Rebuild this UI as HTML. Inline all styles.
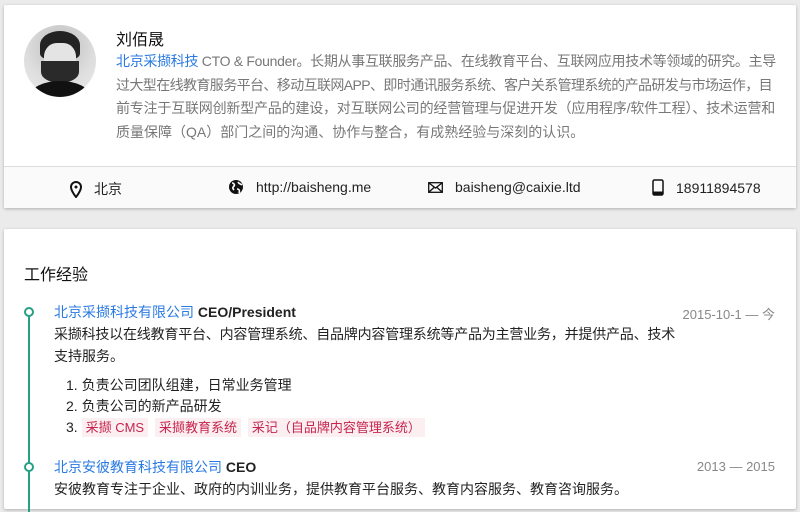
<!DOCTYPE html>
<html><head><meta charset="utf-8"><style>
*{margin:0;padding:0;box-sizing:border-box}
body{width:800px;height:499px;overflow:hidden;background:#ebebeb;font-family:"Liberation Sans","Noto Sans CJK SC",sans-serif;color:#222}
.card{position:absolute;left:4px;width:792px;background:#fff;border-radius:2px;box-shadow:0 1px 3px rgba(0,0,0,.25)}
.c1{top:5px;height:203px}
.av{position:absolute;left:20px;top:20px;width:72px;height:72px;border-radius:50%;background:radial-gradient(circle at 50% 30%,#bbb 0,#ddd 55%,#eee 100%);overflow:hidden}
.name{position:absolute;left:112px;top:21px;font-size:16px;color:#111}
.bio{position:absolute;left:112px;top:45px;width:680px;font-size:14px;line-height:23.5px;color:#777;white-space:nowrap}
.bio span{display:block}
a{color:#2a7ae2;text-decoration:none}
.bar{position:absolute;left:0;top:161px;width:792px;height:42px;background:#fafafa;border-top:1px solid #ddd;font-size:14px;color:#222}
.it{position:absolute;top:12px;display:flex;align-items:center}
.it svg{margin-right:12px}
.c2{top:229px;height:280px}
h2{position:absolute;left:20px;top:32px;font-size:16px;font-weight:normal;color:#111}
.line{position:absolute;left:24px;top:83px;width:2px;height:200px;background:#26a085}
.dot{position:absolute;left:20px;width:10px;height:10px;border:2px solid #26a085;border-radius:50%;background:#fff}
.ent{position:absolute;left:50px;width:720px;font-size:14px;line-height:22px;color:#222;white-space:nowrap}
.ent b{font-weight:bold}
.date{position:absolute;right:21px;font-size:13px;color:#888}
ol{margin:8px 0 0 12px;list-style:none}
ol li{line-height:21px}
.tag{background:#fbeff1;color:#c7254e;padding:2px 4px;font-size:13px;margin-right:3px}
</style></head><body>
<div class="card c1">
 <div class="av">
  <div style="position:absolute;left:16px;top:6px;width:40px;height:28px;background:#222;border-radius:50% 50% 20% 20%"></div>
  <div style="position:absolute;left:20px;top:18px;width:32px;height:34px;background:#e4e4e4;border-radius:40%"></div>
  <div style="position:absolute;left:17px;top:36px;width:38px;height:22px;background:#2a2a2a;border-radius:0 0 50% 50%"></div>
  <div style="position:absolute;left:6px;top:56px;width:60px;height:30px;background:#111;border-radius:50% 50% 0 0"></div>
 </div>
 <div class="name">刘佰晟</div>
 <div class="bio"><span style="letter-spacing:-0.3px"><a>北京采撷科技</a> CTO &amp; Founder。长期从事互联服务产品、在线教育平台、互联网应用技术等领域的研究。主导</span><span style="letter-spacing:-0.6px">过大型在线教育服务平台、移动互联网APP、即时通讯服务系统、客户关系管理系统的产品研发与市场运作，目</span><span style="letter-spacing:-0.2px">前专注于互联网创新型产品的建设，对互联网公司的经营管理与促进开发（应用程序/软件工程）、技术运营和</span><span>质量保障（QA）部门之间的沟通、协作与整合，有成熟经验与深刻的认识。</span></div>
 <div class="bar">
  <div class="it" style="left:66px"><svg width="12" height="17" viewBox="0 0 12 17"><path d="M6 1a5 5 0 0 0-5 5c0 4 5 10 5 10s5-6 5-10a5 5 0 0 0-5-5z" fill="none" stroke="#111" stroke-width="2"/><circle cx="6" cy="6" r="1.5" fill="#111"/></svg>北京</div>
  <div class="it" style="left:224px"><svg width="16" height="16" viewBox="0 0 16 16"><circle cx="8" cy="8" r="7" fill="#111"/><path d="M4 4c2 0 3 2 2 3s-2 2 0 4M10 3c1 2 3 2 4 3M9 10c2 0 3 1 2 4" stroke="#fff" stroke-width="1.6" fill="none"/></svg>http://baisheng.me</div>
  <div class="it" style="left:424px"><svg width="15" height="11" viewBox="0 0 15 11"><rect x=".7" y=".7" width="13.6" height="9.6" fill="none" stroke="#111" stroke-width="1.3"/><path d="M1 1l6.5 5L14 1M1 10l5-4.5M14 10l-5-4.5" stroke="#111" stroke-width="1.3" fill="none"/></svg>baisheng@caixie.ltd</div>
  <div class="it" style="left:648px"><svg width="12" height="17" viewBox="0 0 12 17"><rect x="1" y="1" width="10" height="15" rx="1.5" fill="none" stroke="#111" stroke-width="1.5"/><rect x="1" y="12.5" width="10" height="3.5" fill="#111"/></svg>18911894578</div>
 </div>
</div>
<div class="card c2">
 <h2>工作经验</h2>
 <div class="line"></div>
 <div class="dot" style="top:78px"></div>
 <div class="dot" style="top:233px"></div>
 <div class="ent" style="top:72px"><a>北京采撷科技有限公司</a> <b>CEO/President</b><br><span style="letter-spacing:-0.2px">采撷科技以在线教育平台、内容管理系统、自品牌内容管理系统等产品为主营业务，并提供产品、技术</span><br>支持服务。
  <ol><li>1. 负责公司团队组建，日常业务管理</li><li>2. 负责公司的新产品研发</li><li>3. <span class="tag">采撷 CMS</span> <span class="tag">采撷教育系统</span> <span class="tag">采记（自品牌内容管理系统）</span></li></ol></div>
 <div class="date" style="top:75px">2015-10-1 — 今</div>
 <div class="ent" style="top:227px"><a>北京安彼教育科技有限公司</a> <b>CEO</b><br>安彼教育专注于企业、政府的内训业务，提供教育平台服务、教育内容服务、教育咨询服务。</div>
 <div class="date" style="top:230px">2013 — 2015</div>
</div>
</body></html>
